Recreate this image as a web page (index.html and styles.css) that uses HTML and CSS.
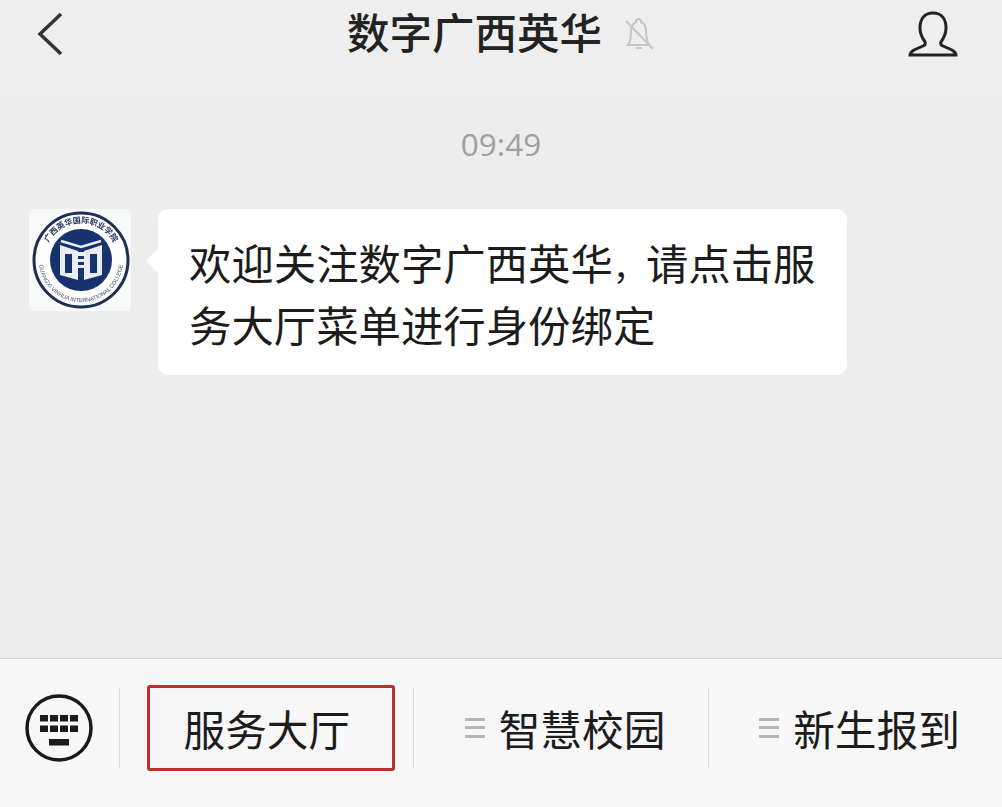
FILE: index.html
```html
<!DOCTYPE html>
<html lang="zh-CN">

<head>
    <meta charset="UTF-8">
    <title>数字广西英华</title>
    <link rel="stylesheet" href="styles.css">
</head>

<body>
    <div class="phone">
        <header class="topbar">
            <svg class="back-icon" viewBox="0 0 26 44">
                <path d="M24 2 L3 22 L24 42" />
            </svg>
            <div class="title-wrap">
                <h1 class="title">数字广西英华</h1>
                <svg class="bell-icon" viewBox="0 0 32 34">
                    <path d="M5 28 C8 24 8 20 8 14 C8 9 11 6 13 5 C13 1 18 1 18 5 C21 6 23 9 23 14 C23 20 24 24 26 28 Z" />
                    <path d="M13 31 H19" />
                    <path d="M3 4 L30 32" />
                </svg>
            </div>
            <svg class="user-icon" viewBox="0 0 50 46">
                <path d="M25 2 C15 2 12 10 12 17 C12 24 15 28 17 31 C18 33 17 34 15 35 L6 39 C3 41 2 42 2 44 H48 C48 42 47 41 44 39 L35 35 C33 34 32 33 33 31 C35 28 38 24 38 17 C38 10 35 2 25 2 Z" />
            </svg>
        </header>

        <main class="chat">
            <div class="time">09:49</div>
            <div class="msg">
                <svg class="avatar" viewBox="0 0 102 102">
                    <defs>
                        <path id="arcTop" d="M15 51 A37 37 0 0 1 89 51" />
                        <path id="arcBottom" d="M10 51 A42 42 0 0 0 94 51" />
                    </defs>
                    <rect width="102" height="102" rx="6" fill="#f8f9f9" />
                    <circle cx="52" cy="51" r="47" fill="#fff" stroke="#1d2f52" stroke-width="3" />
                    <circle cx="52" cy="51" r="31" fill="#17326d" />
                    <text class="logo-cn"><textPath href="#arcTop" startOffset="50%" text-anchor="middle">广西英华国际职业学院</textPath></text>
                    <text class="logo-en"><textPath href="#arcBottom" startOffset="50%" text-anchor="middle">GUANGXI VINHUA INTERNATIONAL COLLEGE</textPath></text>
                    <path d="M31 36 L49 42 V71 L31 66 Z M73 36 L55 42 V71 L73 66 Z" fill="#e8edf3" />
                    <path d="M32 32 L52 38 L72 32" fill="none" stroke="#e8edf3" stroke-width="2.5" />
                    <path d="M36 45 H43 V64 H36 Z M61 45 H68 V64 H61 Z" fill="#17326d" />
                    <path d="M48 43 H56 V47 H48 Z M48 50 H56 V53 H48 Z M48 56 H56 V59 H48 Z" fill="#e8edf3" />
                    <path d="M49 63 H55 V72 H49 Z" fill="#17326d" />
                </svg>
                <div class="bubble">欢迎关注数字广西英华<span class="comma">，</span>请点击服<br>务大厅菜单进行身份绑定</div>
            </div>
        </main>

        <footer class="menubar">
            <div class="kbd-cell">
                <svg class="kbd-icon" viewBox="0 0 68 68">
                    <circle cx="34" cy="34" r="32" fill="none" stroke="#1a1a1a" stroke-width="3.5" />
                    <g fill="#1a1a1a">
                        <rect x="15" y="21" width="8" height="6.5" />
                        <rect x="25" y="21" width="8" height="6.5" />
                        <rect x="35" y="21" width="8" height="6.5" />
                        <rect x="45" y="21" width="8" height="6.5" />
                        <rect x="15" y="31.5" width="8" height="6.5" />
                        <rect x="25" y="31.5" width="8" height="6.5" />
                        <rect x="35" y="31.5" width="8" height="6.5" />
                        <rect x="45" y="31.5" width="8" height="6.5" />
                        <rect x="24" y="45" width="20" height="6.5" />
                    </g>
                </svg>
            </div>
            <div class="menu-item">
                <span class="menu-box">服务大厅</span>
            </div>
            <div class="menu-item">
                <span class="lines"></span>
                <span>智慧校园</span>
            </div>
            <div class="menu-item">
                <span class="lines"></span>
                <span>新生报到</span>
            </div>
        </footer>
    </div>
</body>

</html>
```

FILE: styles.css
```css
* {
    box-sizing: border-box;
}

html,
body {
    margin: 0;
    padding: 0;
}

body {
    font-family: "Noto Sans CJK SC", "Noto Sans", sans-serif;
    color: #1c1c1c;
    background: #ededed;
}

.phone {
    width: 1002px;
    height: 807px;
    display: flex;
    flex-direction: column;
    overflow: hidden;
}

.topbar {
    height: 93px;
    flex-shrink: 0;
    display: grid;
    grid-template-columns: 1fr auto 1fr;
    align-items: start;
    padding: 8px 44px 0;
    background: #eeeeee;
    box-shadow: 0 1px 2px rgba(0, 0, 0, 0.03);
}

.back-icon {
    width: 26px;
    height: 44px;
    margin: 4px 0 0 -7px;
    fill: none;
    stroke: #333;
    stroke-width: 3.5;
}

.title-wrap {
    display: flex;
    align-items: center;
    gap: 21px;
}

.title {
    margin: 0;
    font-size: 42.5px;
    font-weight: 500;
    line-height: 46px;
    color: #222;
}

.bell-icon {
    width: 32px;
    height: 34px;
    margin-top: 5px;
    fill: none;
    stroke: #c6c6c6;
    stroke-width: 2;
}

.user-icon {
    width: 50px;
    height: 46px;
    margin-top: 3px;
    justify-self: end;
    fill: none;
    stroke: #222;
    stroke-width: 3;
}

.chat {
    height: 565px;
    flex-shrink: 0;
    padding: 32px 29px 0;
    background: #ededed;
}

.time {
    text-align: center;
    font-family: "Open Sans", sans-serif;
    font-size: 31.5px;
    line-height: 38px;
    color: #a0a0a0;
    margin-bottom: 46px;
}

.msg {
    display: flex;
    align-items: flex-start;
    gap: 27px;
}

.avatar {
    width: 102px;
    height: 102px;
    flex-shrink: 0;
    filter: blur(0.5px);
}

.logo-cn {
    font-size: 8px;
    font-weight: 700;
    fill: #1d2f52;
}

.logo-en {
    font-family: "Liberation Sans", sans-serif;
    font-size: 5.6px;
    fill: #3a4a68;
}

.bubble {
    position: relative;
    width: 689px;
    height: 166px;
    padding: 22px 24px 0 31px;
    background: #fff;
    border-radius: 10px;
    font-size: 42.4px;
    line-height: 62px;
}

.bubble::before {
    content: "";
    position: absolute;
    left: -12px;
    top: 40px;
    border-top: 12px solid transparent;
    border-bottom: 12px solid transparent;
    border-right: 12px solid #fff;
}

.comma {
    font-size: 33px;
    line-height: 0;
}

.menubar {
    height: 149px;
    flex-shrink: 0;
    display: grid;
    grid-template-columns: 120px 294px 295px 293px;
    align-items: center;
    padding-bottom: 11px;
    background: #f7f7f7;
    border-top: 1px solid #d6d6d6;
}

.kbd-cell {
    height: 80px;
    display: flex;
    align-items: center;
    justify-content: center;
    padding-right: 2px;
    border-right: 1px solid #dcdcdc;
}

.kbd-icon {
    width: 68px;
    height: 68px;
}

.menu-item {
    height: 80px;
    display: flex;
    align-items: center;
    justify-content: center;
    gap: 14px;
    padding-left: 8px;
    font-size: 41.7px;
    border-right: 1px solid #dcdcdc;
}

.menu-item:last-child {
    border-right: none;
}

.menu-box {
    flex-shrink: 0;
    width: 248px;
    height: 86px;
    display: flex;
    align-items: center;
    padding-left: 34px;
    border: 3px solid #b8312f;
    border-radius: 3px;
}

.lines {
    width: 20px;
    height: 20px;
    flex-shrink: 0;
    border-top: 3px solid #b5b5b5;
    border-bottom: 3px solid #b5b5b5;
    background: linear-gradient(#b5b5b5, #b5b5b5) center / 100% 3px no-repeat;
}
```
